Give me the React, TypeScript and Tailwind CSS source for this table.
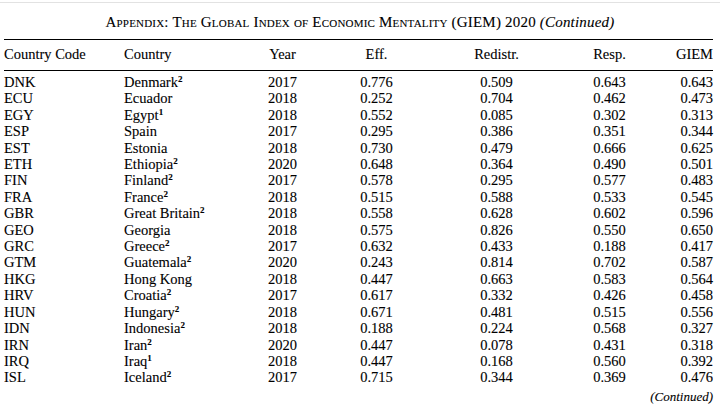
const rows: [string, string, string, string, string, string, string, string][] = [
  ["DNK", "Denmark", "2", "2017", "0.776", "0.509", "0.643", "0.643"],
  ["ECU", "Ecuador", "", "2018", "0.252", "0.704", "0.462", "0.473"],
  ["EGY", "Egypt", "1", "2018", "0.552", "0.085", "0.302", "0.313"],
  ["ESP", "Spain", "", "2017", "0.295", "0.386", "0.351", "0.344"],
  ["EST", "Estonia", "", "2018", "0.730", "0.479", "0.666", "0.625"],
  ["ETH", "Ethiopia", "2", "2020", "0.648", "0.364", "0.490", "0.501"],
  ["FIN", "Finland", "2", "2017", "0.578", "0.295", "0.577", "0.483"],
  ["FRA", "France", "2", "2018", "0.515", "0.588", "0.533", "0.545"],
  ["GBR", "Great Britain", "2", "2018", "0.558", "0.628", "0.602", "0.596"],
  ["GEO", "Georgia", "", "2018", "0.575", "0.826", "0.550", "0.650"],
  ["GRC", "Greece", "2", "2017", "0.632", "0.433", "0.188", "0.417"],
  ["GTM", "Guatemala", "2", "2020", "0.243", "0.814", "0.702", "0.587"],
  ["HKG", "Hong Kong", "", "2018", "0.447", "0.663", "0.583", "0.564"],
  ["HRV", "Croatia", "2", "2017", "0.617", "0.332", "0.426", "0.458"],
  ["HUN", "Hungary", "2", "2018", "0.671", "0.481", "0.515", "0.556"],
  ["IDN", "Indonesia", "2", "2018", "0.188", "0.224", "0.568", "0.327"],
  ["IRN", "Iran", "2", "2020", "0.447", "0.078", "0.431", "0.318"],
  ["IRQ", "Iraq", "1", "2018", "0.447", "0.168", "0.560", "0.392"],
  ["ISL", "Iceland", "2", "2017", "0.715", "0.344", "0.369", "0.476"],
]

const grid = "grid grid-cols-[120px_142px_94px_120px_113px_79px_1fr]"

// numeric columns: header centred over a value-wide box
function Num({ children }: { children: React.ReactNode }) {
  return (
    <div className="flex">
      <div className="flex w-[33px] justify-center whitespace-nowrap">{children}</div>
    </div>
  )
}

export default function App() {
  return (
    <div className="min-h-screen bg-white text-black font-['Liberation_Serif',serif] text-[14.5px] [-webkit-text-stroke:0.1px_black]">
      <div className="pt-[2px]">
        <div className="h-px bg-[#e2e2e2]" />
      </div>

      {/* Title */}
      <h1 className="pt-[10px] pb-[8px] text-center text-[15px] leading-[18px] tracking-[0.2px] [font-variant:small-caps]">
        Appendix: The Global Index of Economic Mentality (GIEM) 2020{" "}
        <span className="italic [font-variant:normal]">(Continued)</span>
      </h1>

      <div className="pl-[4px] pr-[7px]">
        {/* Header */}
        <div className={`${grid} border-y border-black pt-[6px] pb-[7px] leading-[17px]`}>
          <div>Country Code</div>
          <div>Country</div>
          <Num>Year</Num>
          <Num>Eff.</Num>
          <Num>Redistr.</Num>
          <Num>Resp.</Num>
          <div className="text-right">GIEM</div>
        </div>

        {/* Rows */}
        <div className="pt-[3px] leading-[16.4px]">
          {rows.map((r) => (
            <div key={r[0]} className={grid}>
              <div>{r[0]}</div>
              <div>
                {r[1]}
                {r[2] && <sup className="relative top-[-5px] text-[9px] font-bold">{r[2]}</sup>}
              </div>
              <Num>{r[3]}</Num>
              <Num>{r[4]}</Num>
              <Num>{r[5]}</Num>
              <Num>{r[6]}</Num>
              <div className="text-right">{r[7]}</div>
            </div>
          ))}
        </div>

        <div className="pt-[3px] text-right text-[13px] italic leading-[16px]">(Continued)</div>
      </div>
    </div>
  )
}
